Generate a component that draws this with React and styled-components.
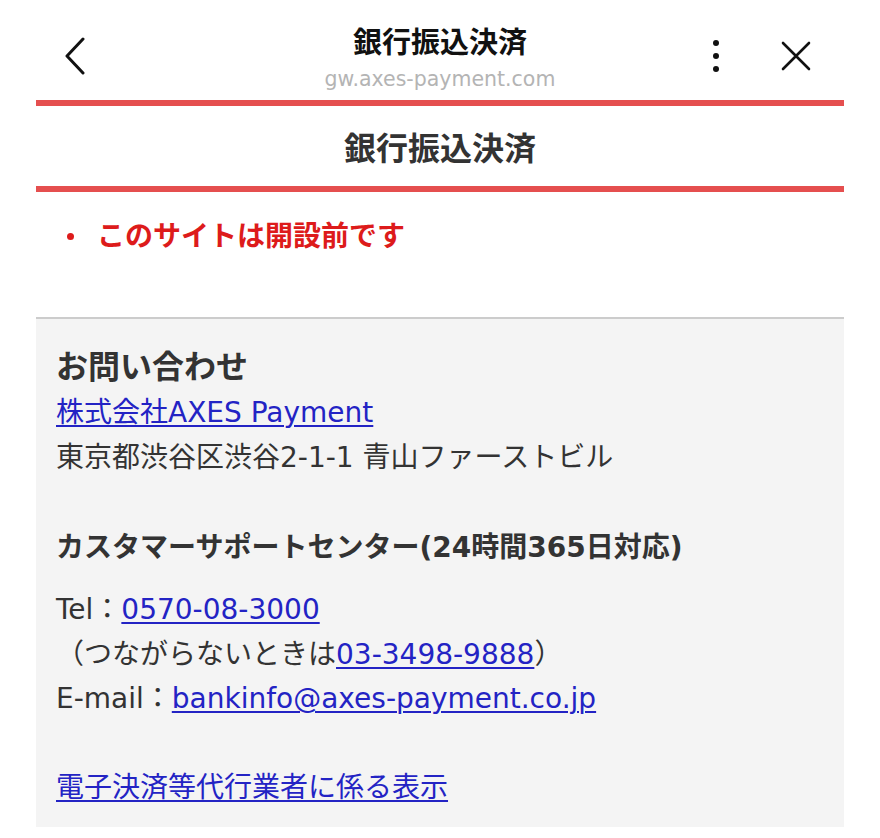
import React from "react";
import styled, { createGlobalStyle } from "styled-components";

const GlobalStyle = createGlobalStyle`
  body {
    margin: 0;
    background: #ffffff;
    font-family: "DejaVu Sans", "Noto Sans CJK JP", sans-serif;
    color: #333333;
  }
`;

const TopBar = styled.header`
  display: grid;
  grid-template-columns: 1fr auto 1fr;
  align-items: start;
  height: 100px;
`;

const LeftSlot = styled.div`
  display: flex;
  padding: 37px 0 0 64px;
`;

const RightSlot = styled.div`
  display: flex;
  justify-content: flex-end;
  align-items: center;
  gap: 61px;
  padding: 39px 69px 0 0;
`;

const IconButton = styled.button`
  display: flex;
  padding: 0;
  border: 0;
  background: none;
  cursor: pointer;
`;

const TitleBlock = styled.div`
  display: flex;
  flex-direction: column;
  align-items: center;
  padding-top: 23px;
`;

const Title = styled.div`
  font-size: 29px;
  font-weight: 700;
  line-height: 40px;
  color: #111111;
`;

const Url = styled.div`
  font-size: 20.5px;
  line-height: 32px;
  color: #b4b4b4;
`;

const Content = styled.main`
  margin: 0 36px;
`;

const RedRule = styled.div`
  height: 6px;
  background: #e54f4f;
`;

const SectionTitle = styled.h1`
  margin: 0;
  height: 80px;
  display: flex;
  align-items: center;
  justify-content: center;
  font-size: 32px;
  font-weight: 700;
  color: #333333;
`;

const Notices = styled.ul`
  margin: 22px 0 58px;
  padding: 0 0 0 31px;
  list-style: none;
`;

const Notice = styled.li`
  display: flex;
  align-items: center;
  gap: 23px;
  font-size: 28px;
  line-height: 45px;
  font-weight: 700;
  color: #dd1b1b;

  &::before {
    content: "";
    width: 7px;
    height: 7px;
    border-radius: 50%;
    background: #dd1b1b;
  }
`;

const Panel = styled.section`
  border-top: 2px solid #cccccc;
  background: #f4f4f4;
  padding: 26px 20px 17px;
  font-size: 28px;
  line-height: 45px;
  color: #333333;
`;

const PanelHeading = styled.h2`
  margin: 0;
  font-size: 32px;
  line-height: 45px;
  font-weight: 700;
`;

const SubHeading = styled.h3`
  margin: ${(p) => p.$top || 0}px 0 18px;
  font-size: 28px;
  line-height: 45px;
  font-weight: 700;
`;

const Line = styled.div`
  line-height: ${(p) => p.$lh || 45}px;
`;

const Link = styled.a`
  color: #2323c4;
  text-decoration: underline;
  text-underline-offset: 3px;
  text-decoration-thickness: 2px;
`;

const Footer = styled.div`
  margin-top: 43px;
`;

function ChevronLeft() {
  return (
    <svg width="22" height="38" viewBox="0 0 22 38">
      <path d="M19 2 L3 19 L19 36" fill="none" stroke="#111" strokeWidth="3" strokeLinecap="round" strokeLinejoin="round" />
    </svg>
  );
}

function MoreDots() {
  return (
    <svg width="8" height="34" viewBox="0 0 8 34">
      <circle cx="4" cy="4" r="3" fill="#111" />
      <circle cx="4" cy="17" r="3" fill="#111" />
      <circle cx="4" cy="30" r="3" fill="#111" />
    </svg>
  );
}

function CloseIcon() {
  return (
    <svg width="30" height="30" viewBox="0 0 30 30">
      <path d="M2 2 L28 28 M28 2 L2 28" fill="none" stroke="#111" strokeWidth="2.6" strokeLinecap="round" />
    </svg>
  );
}

export default function App() {
  return (
    <>
      <GlobalStyle />
      <TopBar>
        <LeftSlot>
          <IconButton aria-label="戻る">
            <ChevronLeft />
          </IconButton>
        </LeftSlot>
        <TitleBlock>
          <Title>銀行振込決済</Title>
          <Url>gw.axes-payment.com</Url>
        </TitleBlock>
        <RightSlot>
          <IconButton aria-label="メニュー">
            <MoreDots />
          </IconButton>
          <IconButton aria-label="閉じる">
            <CloseIcon />
          </IconButton>
        </RightSlot>
      </TopBar>
      <Content>
        <RedRule />
        <SectionTitle>銀行振込決済</SectionTitle>
        <RedRule />
        <Notices>
          <Notice>このサイトは開設前です</Notice>
        </Notices>
        <Panel>
          <PanelHeading>お問い合わせ</PanelHeading>
          <Line>
            <Link href="#">株式会社AXES Payment</Link>
          </Line>
          <Line>東京都渋谷区渋谷2-1-1 青山ファーストビル</Line>
          <SubHeading $top={45}>カスタマーサポートセンター(24時間365日対応)</SubHeading>
          <Line $lh={44.5}>
            Tel：<Link href="#">0570-08-3000</Link>
          </Line>
          <Line $lh={44.5}>
            （つながらないときは<Link href="#">03-3498-9888</Link>）
          </Line>
          <Line $lh={44.5}>
            E-mail：<Link href="#">bankinfo@axes-payment.co.jp</Link>
          </Line>
          <Footer>
            <Link href="#">電子決済等代行業者に係る表示</Link>
          </Footer>
        </Panel>
      </Content>
    </>
  );
}
